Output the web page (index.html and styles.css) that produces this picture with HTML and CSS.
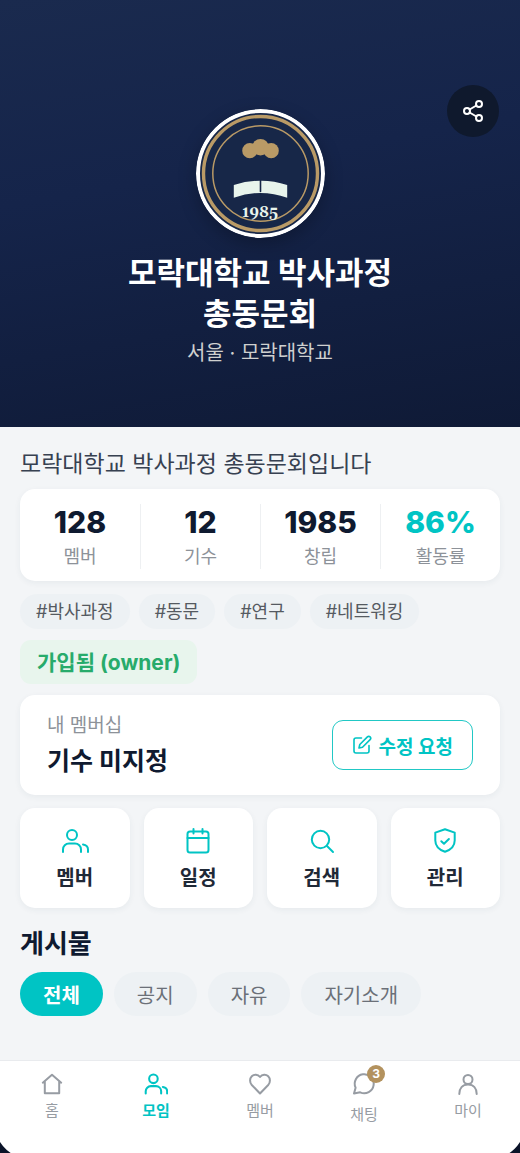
FILE: index.html
```html
<!DOCTYPE html>
<html lang="ko">
<head>
<meta charset="utf-8">
<meta name="viewport" content="width=device-width, initial-scale=1">
<title>모락대학교 박사과정 총동문회</title>
<link rel="stylesheet" href="styles.css">
</head>
<body>
<svg class="defs" aria-hidden="true">
  <symbol id="people" viewBox="0 0 28 28"><circle cx="11" cy="8" r="5"/><path d="M2 25v-2.500a6 6 0 0 1 6-6h6a6 6 0 0 1 6 6V25M22 17.500c3 .5 5 2.500 5 5V25"/></symbol>
</svg>
<header class="hero">
  <button class="share" type="button" aria-label="공유">
    <svg viewBox="0 0 24 24"><circle cx="18" cy="5" r="3"/><circle cx="6" cy="12" r="3"/><circle cx="18" cy="19" r="3"/><path d="M8.600 10.500l6.800-4M8.600 13.500l6.800 4"/></svg>
  </button>
  <svg class="seal" viewBox="0 0 129 129" role="img" aria-label="1985">
    <circle cx="64.500" cy="64.500" r="62.500" fill="#172748" stroke="#fff" stroke-width="4"/>
    <circle cx="64.500" cy="64.500" r="57" fill="none" stroke="#b99a66" stroke-width="3.400"/>
    <circle cx="64.500" cy="64.500" r="47.700" fill="none" stroke="#b99a66" stroke-width="1.500"/>
    <g fill="#b99a66"><circle cx="53.800" cy="41.700" r="7.600"/><circle cx="64.500" cy="38.200" r="8.300"/><circle cx="75.200" cy="41.700" r="7.600"/></g>
    <path fill="#e8f4ec" d="M37.800 76Q51 71.800 64.500 71.700T91.200 76V88.700Q78 83.900 64.500 83.900T37.800 88.700Z"/>
    <path stroke="#172748" stroke-width="1.600" d="M64.500 71V82.500"/>
    <text class="seal-year" x="64" y="108" text-anchor="middle">1985</text>
  </svg>
  <h1 class="hero-title">모락대학교 박사과정<br>총동문회</h1>
  <p class="hero-sub">서울 · 모락대학교</p>
</header>
<main class="content">
  <p class="intro">모락대학교 박사과정 총동문회입니다</p>
  <dl class="stats card">
    <div class="stat"><dd>128</dd><dt>멤버</dt></div>
    <div class="stat"><dd>12</dd><dt>기수</dt></div>
    <div class="stat"><dd>1985</dd><dt>창립</dt></div>
    <div class="stat stat-accent"><dd>86%</dd><dt>활동률</dt></div>
  </dl>
  <ul class="tags">
    <li>#박사과정</li><li>#동문</li><li>#연구</li><li>#네트워킹</li>
  </ul>
  <p class="joined">가입됨 (owner)</p>
  <section class="membership card">
    <div>
      <p class="membership-label">내 멤버십</p>
      <p class="membership-value">기수 미지정</p>
    </div>
    <button class="edit" type="button">
      <svg viewBox="0 0 20 20"><path d="M9.500 3H4a2 2 0 0 0-2 2v11a2 2 0 0 0 2 2h11a2 2 0 0 0 2-2v-5.500"/><path d="M7 13l.8-3.500 7.600-7.600a1.900 1.900 0 0 1 2.700 2.700l-7.600 7.600z"/></svg>
      수정 요청
    </button>
  </section>
  <div class="actions">
    <button class="action card" type="button"><svg><use href="#people"/></svg>멤버</button>
    <button class="action card" type="button"><svg viewBox="0 0 28 28"><rect x="3.500" y="4.500" width="21" height="21" rx="2.500"/><path d="M3.500 11h21M9.500 2v4.500M18.500 2v4.500"/></svg>일정</button>
    <button class="action card" type="button"><svg viewBox="0 0 28 28"><circle cx="12.500" cy="12.500" r="8.700"/><path d="M19 19l6 6"/></svg>검색</button>
    <button class="action card" type="button"><svg viewBox="0 0 28 28"><path d="M14 2.200l9.700 3.400v7.800c0 5.800-3.700 9.200-9.700 11.400C8 22.600 4.300 19.200 4.300 13.400V5.600z"/><path d="M10.300 14.200l2.700 2.600 4.900-4.800"/></svg>관리</button>
  </div>
  <h2 class="section-title">게시물</h2>
  <div class="filters">
    <button class="filter filter-on" type="button">전체</button>
    <button class="filter" type="button">공지</button>
    <button class="filter" type="button">자유</button>
    <button class="filter" type="button">자기소개</button>
  </div>
</main>
<nav class="tabs">
  <a class="tab" href="#home"><svg viewBox="0 0 24 24"><path d="M2.800 10.700L12 2.800l9.200 7.900M4.800 9.500V21.300h14.400V9.500"/></svg>홈</a>
  <a class="tab tab-on" href="#groups" aria-current="page"><svg><use href="#people"/></svg>모임</a>
  <a class="tab" href="#members"><svg viewBox="0 0 24 24"><path d="M12 21.500L3.800 13C1.500 10.500 1.500 6.500 3.800 4.200c2.300-2.200 6-2 8.200.8 2.200-2.800 5.900-3 8.200-.8 2.300 2.300 2.300 6.300 0 8.800z"/></svg>멤버</a>
  <a class="tab tab-chat" href="#chat"><span class="chat-icon"><svg viewBox="0 0 24 24"><path d="M2 21.500l1.600-5.800A9.500 9.500 0 1 1 8.200 20.300z"/></svg><span class="count">3</span></span>채팅</a>
  <a class="tab" href="#my"><svg viewBox="0 0 24 24"><circle cx="12" cy="7.500" r="4.500"/><path d="M3.300 22c0-5.500 3.200-9.500 8.700-9.500s8.700 4 8.700 9.500"/></svg>마이</a>
  <svg class="corner corner-left" viewBox="0 0 16 14"><path d="M0 0Q6 9.500 16 14H0Z"/></svg>
  <svg class="corner corner-right" viewBox="0 0 16 14"><path d="M16 0Q10 9.500 0 14H16Z"/></svg>
</nav>
</body>
</html>
```
FILE: styles.css
```css
* { box-sizing: border-box; }
body, h1, h2, p, dl, dd, ul { margin: 0; padding: 0; }
body {
  display: flex;
  flex-direction: column;
  min-height: 100vh;
  background: #f3f5f7;
  color: #0f1a30;
  font-family: Inter, "Noto Sans CJK KR", sans-serif;
}
button { border: 0; font: inherit; color: inherit; cursor: pointer; }
svg { fill: none; stroke: currentColor; stroke-width: 2; stroke-linecap: round; stroke-linejoin: round; }
.defs { position: absolute; width: 0; height: 0; }

.hero {
  position: relative;
  display: flex;
  flex-direction: column;
  align-items: center;
  padding: 109px 20px 60px;
  background: linear-gradient(170deg, #1a2a4e 0%, #15244a 40%, #0f1a36 100%);
  color: #fff;
  text-align: center;
}
.share {
  position: absolute;
  top: 85px;
  right: 21px;
  display: grid;
  place-items: center;
  width: 52px;
  height: 52px;
  padding: 0;
  border-radius: 50%;
  background: #0f192d;
  color: #fff;
}
.share svg { width: 24px; height: 24px; }
.seal {
  width: 129px;
  height: 129px;
  border-radius: 50%;
  box-shadow: 0 6px 18px rgba(0, 0, 0, 0.25);
  stroke: none;
}
.seal-year { fill: #e8f4ec; font: 700 15px Georgia, Gelasio, "Liberation Serif", serif; }
.hero-title { margin-top: 14px; font-size: 31px; font-weight: 700; line-height: 41px; }
.hero-sub { margin-top: 5px; color: #cfd0cf; font-size: 20px; line-height: 28px; }

.content {
  display: flex;
  flex: 1;
  flex-direction: column;
  padding: 20px 20px 44px;
}
.card { border-radius: 15px; background: #fff; box-shadow: 0 2px 6px rgba(30, 60, 90, 0.06); }
.intro { color: #374151; font-size: 23px; line-height: 34px; }

.stats { display: grid; grid-template-columns: repeat(4, 1fr); margin-top: 8px; padding: 15px 0 12px; }
.stat { display: flex; flex-direction: column; align-items: center; gap: 5px; }
.stat + .stat { border-left: 1px solid #eef0f2; }
.stat dd { font-size: 30px; font-weight: 800; line-height: 36px; }
.stat dt { color: #8d9299; font-size: 18px; line-height: 24px; }
.stat-accent dd { color: #00c4c4; }

.tags { display: flex; flex-wrap: wrap; gap: 9px; margin-top: 13px; list-style: none; }
.tags li {
  padding: 0 16px;
  border-radius: 18px;
  background: #edf1f4;
  color: #555a61;
  font-size: 18px;
  line-height: 35px;
}
.joined {
  align-self: flex-start;
  margin-top: 11px;
  padding: 2px 17px 0;
  border-radius: 11px;
  background: #e8f5ed;
  color: #27ab6b;
  font-size: 21px;
  font-weight: 700;
  line-height: 42px;
}

.membership { display: flex; align-items: center; justify-content: space-between; margin-top: 11px; padding: 15px 27px; }
.membership-label { color: #8d9299; font-size: 19px; line-height: 32px; }
.membership-value { font-size: 25px; font-weight: 700; line-height: 38px; }
.edit {
  display: flex;
  align-items: center;
  gap: 7px;
  height: 50px;
  padding: 0 19px;
  border: 1px solid #21c8c5;
  border-radius: 11px;
  background: #fff;
  color: #00c4c4;
  font-size: 19px;
  font-weight: 700;
}
.edit svg { width: 20px; height: 20px; stroke-width: 1.600; }

.actions { display: grid; grid-template-columns: repeat(4, 1fr); gap: 14px; margin-top: 13px; }
.action {
  display: flex;
  flex-direction: column;
  align-items: center;
  padding: 19px 0 15px;
  color: #1f2937;
  font-size: 20px;
  font-weight: 700;
  line-height: 30px;
}
.action svg { width: 28px; height: 28px; margin-bottom: 8px; color: #00c4c4; }
.section-title { margin-top: 17px; font-size: 26px; font-weight: 700; line-height: 38px; }
.filters { display: flex; flex-wrap: wrap; gap: 11px; margin-top: 9px; }
.filter {
  height: 44px;
  padding: 0 23px;
  border-radius: 22px;
  background: #edf1f4;
  color: #6b7078;
  font-size: 20px;
}
.filter-on { background: #00c4c4; color: #fff; font-weight: 700; }

.tabs {
  position: relative;
  display: grid;
  grid-template-columns: repeat(5, 1fr);
  padding: 11px 0 30px;
  border-top: 1px solid #e9ebee;
  background: #fff;
}
.tab {
  display: flex;
  flex-direction: column;
  align-items: center;
  gap: 4px;
  color: #979ca3;
  font-size: 15px;
  line-height: 22px;
  text-decoration: none;
}
.tab > svg, .chat-icon svg { display: block; width: 24px; height: 24px; }
.tab-on { color: #00c4c4; font-weight: 700; }
.tab-on > svg { stroke-width: 2.400; }
.tab-chat { gap: 8px; }
.chat-icon { position: relative; }
.count {
  position: absolute;
  top: -7px;
  right: -9px;
  width: 18px;
  height: 18px;
  border-radius: 50%;
  background: #b3925e;
  color: #fff;
  font-size: 12px;
  font-weight: 700;
  line-height: 18px;
  text-align: center;
}
.corner { position: absolute; bottom: 0; width: 16px; height: 14px; fill: #0b1328; stroke: none; }
.corner-left { left: 0; }
.corner-right { right: 0; }
```
